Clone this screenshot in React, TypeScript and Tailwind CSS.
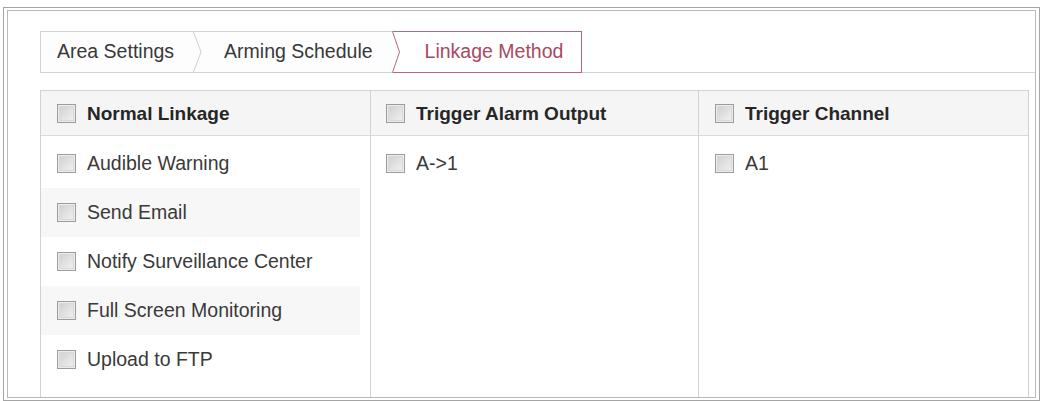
import React from "react";

function Box() {
  return (
    <span className="inline-block shrink-0 w-[19px] h-[19px] border border-[#9c9c9c] bg-[linear-gradient(135deg,#cdcdcd,#f4f4f4)] shadow-[inset_0_0_0_1px_#ededed,inset_0_0_0_2px_#d8d8d8]" />
  );
}

function Item({ label, bold = false, pl = "pl-[16px]" }: { label: string; bold?: boolean; pl?: string }) {
  return (
    <div className={`flex items-center gap-[11px] ${pl}`}>
      <Box />
      <span className={bold ? "text-[19px] font-bold text-[#262626]" : "text-[19.5px] text-[#3a3a3a]"}>{label}</span>
    </div>
  );
}

export default function App() {
  const normal = [
    "Audible Warning",
    "Send Email",
    "Notify Surveillance Center",
    "Full Screen Monitoring",
    "Upload to FTP",
  ];
  return (
    <div className="w-[1045px] h-[401px] bg-white overflow-hidden pt-[7px] pl-[3px] font-['Liberation_Sans',Arial,sans-serif] leading-none">
      <div className="w-[1037px] h-[394px] border border-[#a4a4a4] px-[3px] py-[2px]">
        <div className="h-full border border-[#b8b8b8] flex flex-col pt-[20px] pl-[32px] overflow-hidden">
          {/* tab bar */}
          <div className="flex items-stretch h-[42px] shrink-0">
            <div className="flex items-center border-t border-b border-l border-[#d2d2d2] bg-[#fdfdfd]">
              <span className="pl-[16px] pr-[19px] text-[19.5px] text-[#383838]">Area Settings</span>
              <svg width="9" height="40" viewBox="0 0 9 40" className="block shrink-0">
                <polyline points="0.5,0 8,20 0.5,40" fill="none" stroke="#cfcfcf" strokeWidth="1" />
              </svg>
              <span className="pl-[22px] pr-[19px] text-[19.5px] text-[#383838]">Arming Schedule</span>
            </div>
            <svg width="9" height="42" viewBox="0 0 9 42" className="block shrink-0">
              <path d="M9,0.5 H0.5 L7.5,21 L0.5,41.5 H9" fill="none" stroke="#b8687c" strokeWidth="1" />
            </svg>
            <div className="flex items-center border-t border-r border-b border-[#b8687c] pl-[24px] pr-[18px]">
              <span className="text-[19.5px] text-[#a64a62]">Linkage Method</span>
            </div>
            <div className="flex-1 border-b border-[#d2d2d2]" />
          </div>

          {/* table */}
          <div className="mt-[17px] mr-[6px] flex-1 border-t border-[#d2d2d2] grid grid-cols-[330px_328px_1fr]">
            <div className="border-l border-[#d2d2d2] flex flex-col">
              <div className="h-[45px] border-b border-[#dadada] bg-[#f5f5f5] flex items-center">
                <Item label="Normal Linkage" bold />
              </div>
              <div className="pt-[3px] flex flex-col">
                {normal.map((n, i) => (
                  <div
                    key={n}
                    className={`h-[49px] flex items-center mr-[10px] ${i % 2 === 1 ? "bg-[#f7f7f7]" : "bg-white"}`}
                  >
                    <Item label={n} />
                  </div>
                ))}
              </div>
            </div>
            <div className="border-l border-[#d2d2d2] flex flex-col">
              <div className="h-[45px] border-b border-[#dadada] bg-[#f5f5f5] flex items-center">
                <Item label="Trigger Alarm Output" bold pl="pl-[15px]" />
              </div>
              <div className="pt-[3px]">
                <div className="h-[49px] flex items-center">
                  <Item label="A->1" pl="pl-[15px]" />
                </div>
              </div>
            </div>
            <div className="border-l border-r border-[#d2d2d2] flex flex-col">
              <div className="h-[45px] border-b border-[#dadada] bg-[#f5f5f5] flex items-center">
                <Item label="Trigger Channel" bold />
              </div>
              <div className="pt-[3px]">
                <div className="h-[49px] flex items-center">
                  <Item label="A1" />
                </div>
              </div>
            </div>
          </div>
        </div>
      </div>
    </div>
  );
}
